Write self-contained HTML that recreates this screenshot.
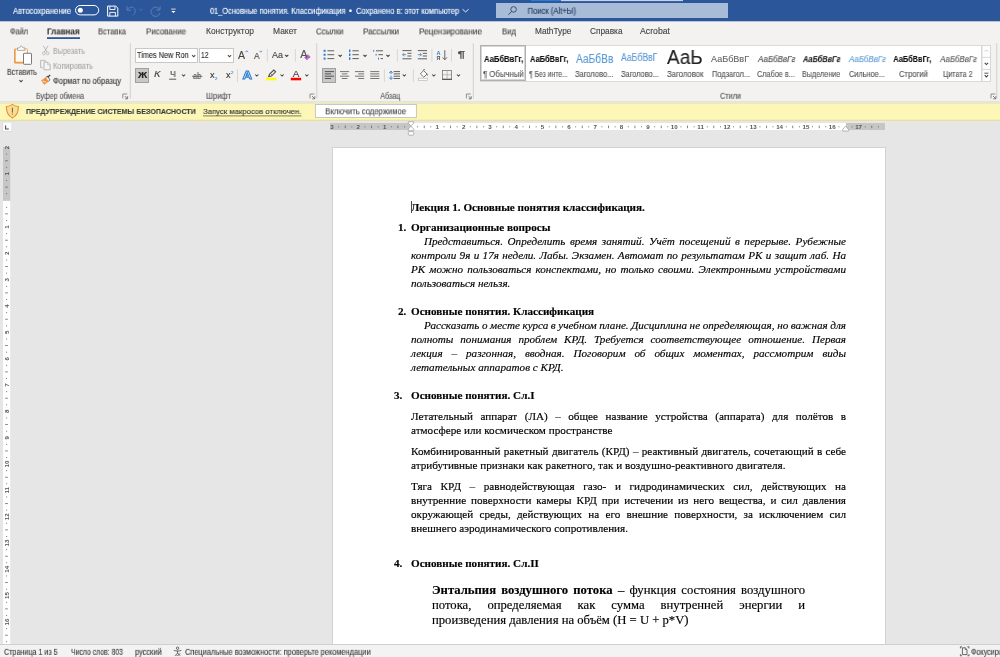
<!DOCTYPE html>
<html lang="ru">
<head>
<meta charset="utf-8">
<title>01_Основные понятия. Классификация - Word</title>
<style>
html,body{margin:0;padding:0;}
body{width:1000px;height:657px;overflow:hidden;position:relative;background:#e6e6e6;font-family:'Liberation Sans',sans-serif;}
#app{position:absolute;left:0;top:0;width:1000px;height:657px;overflow:hidden;}
.abs{position:absolute;}
.t{-webkit-text-stroke:0.12px currentColor;will-change:transform;position:absolute;white-space:pre;line-height:12px;height:12px;transform-origin:0 50%;}
#titlebar{left:0;top:0;width:1000px;height:21px;background:#2b579a;}
#search{left:496px;top:3px;width:232px;height:15px;background:#a8bbd7;}
#tbedge{left:0;top:21px;width:1000px;height:1px;background:#b7c3d7;}
#ribbon{left:0;top:21px;width:1000px;height:81px;background:#f3f2f1;}
#ribbonline{left:0;top:101px;width:1000px;height:1px;background:#e4e3dc;}
#msgbar{left:0;top:102px;width:1000px;height:18px;background:#fcf7b6;border-top:1px solid #ece6a4;border-bottom:1px solid #e6e0a2;box-sizing:border-box;will-change:transform;transform:translateY(0.7px);}
#msgbtn{left:315px;top:104px;width:101px;height:13px;background:#fdfdfd;border:1px solid #c6c6c6;box-sizing:border-box;}
#page{left:332px;top:147px;width:554px;height:520px;background:#fff;border:1px solid #d2d2d2;box-sizing:border-box;}
#status{left:0;top:644px;width:1000px;height:13px;background:#f3f3f3;border-top:1px solid #cfcfcf;box-sizing:border-box;}
#gallery{left:480px;top:45px;width:502px;height:37px;background:#fff;border:1px solid #dadada;box-sizing:border-box;}
#galsel{left:480px;top:45px;width:46px;height:36px;border:1px solid #b0b0b0;box-shadow:inset 0 0 0 1px #d6d6d6;box-sizing:border-box;background:#fff;}
.fbox{background:#fff;border:1px solid #c8c8c8;box-sizing:border-box;}
.sel{background:#c8c8c8;border:1px solid #a0a0a0;box-sizing:border-box;}
.dl{will-change:transform;position:absolute;white-space:pre;font-family:'Liberation Serif',serif;font-size:11.15px;line-height:14px;height:14px;color:#000;-webkit-text-stroke:0.16px #000;}
.j{text-align:justify;text-align-last:justify;white-space:normal;}
svg{position:absolute;left:0;top:0;overflow:visible;will-change:transform;}
</style>
</head>
<body>
<div id="app">
<div class="abs" id="titlebar"></div>
<div class="abs" id="search"></div>
<div class="abs" id="ribbon"></div>
<div class="abs" id="tbedge"></div>
<div class="abs" id="ribbonline"></div>
<div class="abs" id="msgbar"></div>
<div class="abs" id="gallery"></div>
<div class="abs" id="galsel"></div>
<div class="abs fbox" style="left:135px;top:48px;width:63px;height:15px"></div>
<div class="abs fbox" style="left:199px;top:48px;width:35px;height:15px"></div>
<div class="abs sel" style="left:135px;top:68px;width:14px;height:15px"></div>
<div class="abs sel" style="left:322px;top:68px;width:14px;height:15px"></div>
<div class="abs" id="page"></div>
<div class="dl" style="left:411px;top:199px;transform:translate(0.00px,1.00px);font-weight:bold;">Лекция 1. Основные понятия классификация.</div>
<div class="dl" style="left:398px;top:220px;transform:translate(0.00px,0.34px);font-weight:bold;">1.</div>
<div class="dl" style="left:411px;top:220px;transform:translate(0.00px,0.34px);font-weight:bold;">Организационные вопросы</div>
<div class="dl" style="left:424px;top:234px;transform:translate(0.00px,0.34px);word-spacing:1.744px;font-style:italic;">Представиться. Определить время занятий. Учёт посещений в перерыве. Рубежные</div>
<div class="dl" style="left:411px;top:248px;transform:translate(0.00px,0.34px);word-spacing:0.568px;font-style:italic;">контроли 9я и 17я недели. Лабы. Экзамен. Автомат по результатам РК и защит лаб. На</div>
<div class="dl" style="left:411px;top:262px;transform:translate(0.00px,0.34px);word-spacing:1.307px;font-style:italic;">РК можно пользоваться конспектами, но только своими. Электронными устройствами</div>
<div class="dl" style="left:411px;top:276px;transform:translate(0.00px,0.34px);font-style:italic;">пользоваться нельзя.</div>
<div class="dl" style="left:398px;top:303px;transform:translate(0.00px,1.00px);font-weight:bold;">2.</div>
<div class="dl" style="left:411px;top:303px;transform:translate(0.00px,1.00px);font-weight:bold;">Основные понятия. Классификация</div>
<div class="dl" style="left:424px;top:317px;transform:translate(0.00px,1.00px);word-spacing:-0.223px;font-style:italic;">Рассказать о месте курса в учебном плане. Дисциплина не определяющая, но важная для</div>
<div class="dl" style="left:411px;top:331px;transform:translate(0.00px,1.00px);word-spacing:4.109px;font-style:italic;">полноты понимания проблем КРД. Требуется соответствующее отношение. Первая</div>
<div class="dl" style="left:411px;top:345px;transform:translate(0.00px,1.00px);word-spacing:6.130px;font-style:italic;">лекция – разгонная, вводная. Поговорим об общих моментах, рассмотрим виды</div>
<div class="dl" style="left:411px;top:359px;transform:translate(0.00px,1.00px);font-style:italic;">летательных аппаратов с КРД.</div>
<div class="dl" style="left:394px;top:387px;transform:translate(0.00px,1.00px);font-weight:bold;">3.</div>
<div class="dl" style="left:411px;top:387px;transform:translate(0.00px,1.00px);font-weight:bold;">Основные понятия. Сл.I</div>
<div class="dl" style="left:411px;top:408px;transform:translate(0.00px,1.00px);word-spacing:4.709px;">Летательный аппарат (ЛА) – общее название устройства (аппарата) для полётов в</div>
<div class="dl" style="left:411px;top:422px;transform:translate(0.00px,1.00px);">атмосфере или космическом пространстве</div>
<div class="dl" style="left:411px;top:443px;transform:translate(0.00px,1.00px);word-spacing:0.521px;">Комбинированный ракетный двигатель (КРД) – реактивный двигатель, сочетающий в себе</div>
<div class="dl" style="left:411px;top:457px;transform:translate(0.00px,1.00px);">атрибутивные признаки как ракетного, так и воздушно-реактивного двигателя.</div>
<div class="dl" style="left:411px;top:478px;transform:translate(0.00px,1.00px);word-spacing:5.816px;">Тяга КРД – равнодействующая газо- и гидродинамических сил, действующих на</div>
<div class="dl" style="left:411px;top:492px;transform:translate(0.00px,1.00px);word-spacing:2.126px;">внутренние поверхности камеры КРД при истечении из него вещества, и сил давления</div>
<div class="dl" style="left:411px;top:506px;transform:translate(0.00px,1.00px);word-spacing:3.396px;">окружающей среды, действующих на его внешние поверхности, за исключением сил</div>
<div class="dl" style="left:411px;top:520px;transform:translate(0.00px,1.00px);">внешнего аэродинамического сопротивления.</div>
<div class="dl" style="left:394px;top:555px;transform:translate(0.00px,1.00px);font-weight:bold;">4.</div>
<div class="dl" style="left:411px;top:555px;transform:translate(0.00px,1.00px);font-weight:bold;">Основные понятия. Сл.II</div>
<div class="dl" style="left:432px;top:582px;transform:translate(0.00px,0.00px);word-spacing:2.083px;font-size:12.68px;line-height:16px;height:16px;"><b>Энтальпия воздушного потока</b> – функция состояния воздушного</div>
<div class="dl" style="left:432px;top:597px;transform:translate(0.00px,0.00px);word-spacing:12.839px;font-size:12.68px;line-height:16px;height:16px;">потока, определяемая как сумма внутренней энергии и</div>
<div class="dl" style="left:432px;top:612px;transform:translate(0.00px,0.00px);font-size:12.68px;line-height:16px;height:16px;">произведения давления на объём (H = U + p*V)</div>
<div class="abs" style="left:411px;top:201px;width:1px;height:12px;background:#4a4a4a"></div>
<div class="abs" id="status"></div>
<svg width="1000" height="657" viewBox="0 0 1000 657" font-family="'Liberation Sans',sans-serif">
<rect x="2" y="121.5" width="10.5" height="10.5" fill="#dedede"/>
<rect x="3" y="122.5" width="8.5" height="8.5" fill="#fbfbfb"/>
<path d="M5.6 125.6v3.4h3.2" fill="none" stroke="#505050" stroke-width="1.1"/>
<rect x="330" y="123" width="81" height="7" fill="#c6c6c6"/>
<rect x="411" y="123" width="435" height="7" fill="#fff"/>
<rect x="846" y="123" width="39" height="7" fill="#c6c6c6"/>
<text x="332.0" y="128.9" font-size="6.2" font-weight="700" fill="#555" text-anchor="middle">3</text>
<rect x="338.2" y="126.3" width="0.9" height="1" fill="#666"/>
<rect x="344.8" y="125.6" width="0.8" height="2.6" fill="#666"/>
<rect x="351.4" y="126.3" width="0.9" height="1" fill="#666"/>
<text x="358.3" y="128.9" font-size="6.2" font-weight="700" fill="#555" text-anchor="middle">2</text>
<rect x="364.5" y="126.3" width="0.9" height="1" fill="#666"/>
<rect x="371.2" y="125.6" width="0.8" height="2.6" fill="#666"/>
<rect x="377.7" y="126.3" width="0.9" height="1" fill="#666"/>
<text x="384.7" y="128.9" font-size="6.2" font-weight="700" fill="#555" text-anchor="middle">1</text>
<rect x="390.9" y="126.3" width="0.9" height="1" fill="#666"/>
<rect x="397.5" y="125.6" width="0.8" height="2.6" fill="#666"/>
<rect x="404.0" y="126.3" width="0.9" height="1" fill="#666"/>
<rect x="417.2" y="126.3" width="0.9" height="1" fill="#666"/>
<rect x="423.8" y="125.6" width="0.8" height="2.6" fill="#666"/>
<rect x="430.3" y="126.3" width="0.9" height="1" fill="#666"/>
<text x="437.3" y="128.9" font-size="6.2" font-weight="700" fill="#555" text-anchor="middle">1</text>
<rect x="443.5" y="126.3" width="0.9" height="1" fill="#666"/>
<rect x="450.1" y="125.6" width="0.8" height="2.6" fill="#666"/>
<rect x="456.7" y="126.3" width="0.9" height="1" fill="#666"/>
<text x="463.7" y="128.9" font-size="6.2" font-weight="700" fill="#555" text-anchor="middle">2</text>
<rect x="469.8" y="126.3" width="0.9" height="1" fill="#666"/>
<rect x="476.5" y="125.6" width="0.8" height="2.6" fill="#666"/>
<rect x="483.0" y="126.3" width="0.9" height="1" fill="#666"/>
<text x="490.0" y="128.9" font-size="6.2" font-weight="700" fill="#555" text-anchor="middle">3</text>
<rect x="496.2" y="126.3" width="0.9" height="1" fill="#666"/>
<rect x="502.8" y="125.6" width="0.8" height="2.6" fill="#666"/>
<rect x="509.3" y="126.3" width="0.9" height="1" fill="#666"/>
<text x="516.3" y="128.9" font-size="6.2" font-weight="700" fill="#555" text-anchor="middle">4</text>
<rect x="522.5" y="126.3" width="0.9" height="1" fill="#666"/>
<rect x="529.1" y="125.6" width="0.8" height="2.6" fill="#666"/>
<rect x="535.7" y="126.3" width="0.9" height="1" fill="#666"/>
<text x="542.6" y="128.9" font-size="6.2" font-weight="700" fill="#555" text-anchor="middle">5</text>
<rect x="548.8" y="126.3" width="0.9" height="1" fill="#666"/>
<rect x="555.5" y="125.6" width="0.8" height="2.6" fill="#666"/>
<rect x="562.0" y="126.3" width="0.9" height="1" fill="#666"/>
<text x="569.0" y="128.9" font-size="6.2" font-weight="700" fill="#555" text-anchor="middle">6</text>
<rect x="575.2" y="126.3" width="0.9" height="1" fill="#666"/>
<rect x="581.8" y="125.6" width="0.8" height="2.6" fill="#666"/>
<rect x="588.3" y="126.3" width="0.9" height="1" fill="#666"/>
<text x="595.3" y="128.9" font-size="6.2" font-weight="700" fill="#555" text-anchor="middle">7</text>
<rect x="601.5" y="126.3" width="0.9" height="1" fill="#666"/>
<rect x="608.1" y="125.6" width="0.8" height="2.6" fill="#666"/>
<rect x="614.7" y="126.3" width="0.9" height="1" fill="#666"/>
<text x="621.6" y="128.9" font-size="6.2" font-weight="700" fill="#555" text-anchor="middle">8</text>
<rect x="627.8" y="126.3" width="0.9" height="1" fill="#666"/>
<rect x="634.5" y="125.6" width="0.8" height="2.6" fill="#666"/>
<rect x="641.0" y="126.3" width="0.9" height="1" fill="#666"/>
<text x="648.0" y="128.9" font-size="6.2" font-weight="700" fill="#555" text-anchor="middle">9</text>
<rect x="654.2" y="126.3" width="0.9" height="1" fill="#666"/>
<rect x="660.8" y="125.6" width="0.8" height="2.6" fill="#666"/>
<rect x="667.3" y="126.3" width="0.9" height="1" fill="#666"/>
<text x="674.3" y="128.9" font-size="6.2" font-weight="700" fill="#555" text-anchor="middle">10</text>
<rect x="680.5" y="126.3" width="0.9" height="1" fill="#666"/>
<rect x="687.1" y="125.6" width="0.8" height="2.6" fill="#666"/>
<rect x="693.6" y="126.3" width="0.9" height="1" fill="#666"/>
<text x="700.6" y="128.9" font-size="6.2" font-weight="700" fill="#555" text-anchor="middle">11</text>
<rect x="706.8" y="126.3" width="0.9" height="1" fill="#666"/>
<rect x="713.4" y="125.6" width="0.8" height="2.6" fill="#666"/>
<rect x="720.0" y="126.3" width="0.9" height="1" fill="#666"/>
<text x="727.0" y="128.9" font-size="6.2" font-weight="700" fill="#555" text-anchor="middle">12</text>
<rect x="733.1" y="126.3" width="0.9" height="1" fill="#666"/>
<rect x="739.8" y="125.6" width="0.8" height="2.6" fill="#666"/>
<rect x="746.3" y="126.3" width="0.9" height="1" fill="#666"/>
<text x="753.3" y="128.9" font-size="6.2" font-weight="700" fill="#555" text-anchor="middle">13</text>
<rect x="759.5" y="126.3" width="0.9" height="1" fill="#666"/>
<rect x="766.1" y="125.6" width="0.8" height="2.6" fill="#666"/>
<rect x="772.6" y="126.3" width="0.9" height="1" fill="#666"/>
<text x="779.6" y="128.9" font-size="6.2" font-weight="700" fill="#555" text-anchor="middle">14</text>
<rect x="785.8" y="126.3" width="0.9" height="1" fill="#666"/>
<rect x="792.4" y="125.6" width="0.8" height="2.6" fill="#666"/>
<rect x="799.0" y="126.3" width="0.9" height="1" fill="#666"/>
<text x="806.0" y="128.9" font-size="6.2" font-weight="700" fill="#555" text-anchor="middle">15</text>
<rect x="812.1" y="126.3" width="0.9" height="1" fill="#666"/>
<rect x="818.8" y="125.6" width="0.8" height="2.6" fill="#666"/>
<rect x="825.3" y="126.3" width="0.9" height="1" fill="#666"/>
<text x="832.3" y="128.9" font-size="6.2" font-weight="700" fill="#555" text-anchor="middle">16</text>
<rect x="838.5" y="126.3" width="0.9" height="1" fill="#666"/>
<rect x="851.6" y="126.3" width="0.9" height="1" fill="#666"/>
<text x="858.6" y="128.9" font-size="6.2" font-weight="700" fill="#555" text-anchor="middle">17</text>
<rect x="864.8" y="126.3" width="0.9" height="1" fill="#666"/>
<rect x="871.4" y="125.6" width="0.8" height="2.6" fill="#666"/>
<rect x="878.0" y="126.3" width="0.9" height="1" fill="#666"/>
<path d="M408.3 121.7h5.4v1.6l-2.7 2.9l-2.7 -2.9z" fill="#fff" stroke="#999" stroke-width="0.7"/>
<path d="M408.3 130.7h5.4v-1.6l-2.7 -2.9l-2.7 2.9z" fill="#fff" stroke="#999" stroke-width="0.7"/>
<rect x="408.3" y="131.6" width="5.4" height="3.6" rx="0.8" fill="#fff" stroke="#999" stroke-width="0.7"/>
<path d="M842.7 131h5.8v-1.6l-2.9 -3.2l-2.9 3.2z" fill="#fff" stroke="#999" stroke-width="0.7"/>
<rect x="3" y="147" width="7.2" height="53.9" fill="#c6c6c6"/>
<rect x="3" y="200.9" width="7.2" height="443.1" fill="#fff"/>
<text transform="translate(8.8 147.5) rotate(-90)" font-size="6.2" font-weight="700" fill="#555" text-anchor="middle">2</text>
<rect x="6.1" y="153.7" width="1" height="0.9" fill="#666"/>
<rect x="5.2" y="160.4" width="2.6" height="0.8" fill="#666"/>
<rect x="6.1" y="166.9" width="1" height="0.9" fill="#666"/>
<text transform="translate(8.8 173.9) rotate(-90)" font-size="6.2" font-weight="700" fill="#555" text-anchor="middle">1</text>
<rect x="6.1" y="180.1" width="1" height="0.9" fill="#666"/>
<rect x="5.2" y="186.7" width="2.6" height="0.8" fill="#666"/>
<rect x="6.1" y="193.2" width="1" height="0.9" fill="#666"/>
<rect x="6.1" y="206.9" width="1" height="0.9" fill="#666"/>
<rect x="5.2" y="213.5" width="2.6" height="0.8" fill="#666"/>
<rect x="6.1" y="220.0" width="1" height="0.9" fill="#666"/>
<text transform="translate(8.8 227.0) rotate(-90)" font-size="6.2" font-weight="700" fill="#555" text-anchor="middle">1</text>
<rect x="6.1" y="233.2" width="1" height="0.9" fill="#666"/>
<rect x="5.2" y="239.8" width="2.6" height="0.8" fill="#666"/>
<rect x="6.1" y="246.4" width="1" height="0.9" fill="#666"/>
<text transform="translate(8.8 253.4) rotate(-90)" font-size="6.2" font-weight="700" fill="#555" text-anchor="middle">2</text>
<rect x="6.1" y="259.5" width="1" height="0.9" fill="#666"/>
<rect x="5.2" y="266.2" width="2.6" height="0.8" fill="#666"/>
<rect x="6.1" y="272.7" width="1" height="0.9" fill="#666"/>
<text transform="translate(8.8 279.7) rotate(-90)" font-size="6.2" font-weight="700" fill="#555" text-anchor="middle">3</text>
<rect x="6.1" y="285.9" width="1" height="0.9" fill="#666"/>
<rect x="5.2" y="292.5" width="2.6" height="0.8" fill="#666"/>
<rect x="6.1" y="299.0" width="1" height="0.9" fill="#666"/>
<text transform="translate(8.8 306.0) rotate(-90)" font-size="6.2" font-weight="700" fill="#555" text-anchor="middle">4</text>
<rect x="6.1" y="312.2" width="1" height="0.9" fill="#666"/>
<rect x="5.2" y="318.8" width="2.6" height="0.8" fill="#666"/>
<rect x="6.1" y="325.4" width="1" height="0.9" fill="#666"/>
<text transform="translate(8.8 332.3) rotate(-90)" font-size="6.2" font-weight="700" fill="#555" text-anchor="middle">5</text>
<rect x="6.1" y="338.5" width="1" height="0.9" fill="#666"/>
<rect x="5.2" y="345.2" width="2.6" height="0.8" fill="#666"/>
<rect x="6.1" y="351.7" width="1" height="0.9" fill="#666"/>
<text transform="translate(8.8 358.7) rotate(-90)" font-size="6.2" font-weight="700" fill="#555" text-anchor="middle">6</text>
<rect x="6.1" y="364.9" width="1" height="0.9" fill="#666"/>
<rect x="5.2" y="371.5" width="2.6" height="0.8" fill="#666"/>
<rect x="6.1" y="378.0" width="1" height="0.9" fill="#666"/>
<text transform="translate(8.8 385.0) rotate(-90)" font-size="6.2" font-weight="700" fill="#555" text-anchor="middle">7</text>
<rect x="6.1" y="391.2" width="1" height="0.9" fill="#666"/>
<rect x="5.2" y="397.8" width="2.6" height="0.8" fill="#666"/>
<rect x="6.1" y="404.4" width="1" height="0.9" fill="#666"/>
<text transform="translate(8.8 411.3) rotate(-90)" font-size="6.2" font-weight="700" fill="#555" text-anchor="middle">8</text>
<rect x="6.1" y="417.5" width="1" height="0.9" fill="#666"/>
<rect x="5.2" y="424.2" width="2.6" height="0.8" fill="#666"/>
<rect x="6.1" y="430.7" width="1" height="0.9" fill="#666"/>
<text transform="translate(8.8 437.7) rotate(-90)" font-size="6.2" font-weight="700" fill="#555" text-anchor="middle">9</text>
<rect x="6.1" y="443.9" width="1" height="0.9" fill="#666"/>
<rect x="5.2" y="450.5" width="2.6" height="0.8" fill="#666"/>
<rect x="6.1" y="457.0" width="1" height="0.9" fill="#666"/>
<text transform="translate(8.8 464.0) rotate(-90)" font-size="6.2" font-weight="700" fill="#555" text-anchor="middle">10</text>
<rect x="6.1" y="470.2" width="1" height="0.9" fill="#666"/>
<rect x="5.2" y="476.8" width="2.6" height="0.8" fill="#666"/>
<rect x="6.1" y="483.3" width="1" height="0.9" fill="#666"/>
<text transform="translate(8.8 490.3) rotate(-90)" font-size="6.2" font-weight="700" fill="#555" text-anchor="middle">11</text>
<rect x="6.1" y="496.5" width="1" height="0.9" fill="#666"/>
<rect x="5.2" y="503.1" width="2.6" height="0.8" fill="#666"/>
<rect x="6.1" y="509.7" width="1" height="0.9" fill="#666"/>
<text transform="translate(8.8 516.7) rotate(-90)" font-size="6.2" font-weight="700" fill="#555" text-anchor="middle">12</text>
<rect x="6.1" y="522.8" width="1" height="0.9" fill="#666"/>
<rect x="5.2" y="529.5" width="2.6" height="0.8" fill="#666"/>
<rect x="6.1" y="536.0" width="1" height="0.9" fill="#666"/>
<text transform="translate(8.8 543.0) rotate(-90)" font-size="6.2" font-weight="700" fill="#555" text-anchor="middle">13</text>
<rect x="6.1" y="549.2" width="1" height="0.9" fill="#666"/>
<rect x="5.2" y="555.8" width="2.6" height="0.8" fill="#666"/>
<rect x="6.1" y="562.3" width="1" height="0.9" fill="#666"/>
<text transform="translate(8.8 569.3) rotate(-90)" font-size="6.2" font-weight="700" fill="#555" text-anchor="middle">14</text>
<rect x="6.1" y="575.5" width="1" height="0.9" fill="#666"/>
<rect x="5.2" y="582.1" width="2.6" height="0.8" fill="#666"/>
<rect x="6.1" y="588.7" width="1" height="0.9" fill="#666"/>
<text transform="translate(8.8 595.6) rotate(-90)" font-size="6.2" font-weight="700" fill="#555" text-anchor="middle">15</text>
<rect x="6.1" y="601.8" width="1" height="0.9" fill="#666"/>
<rect x="5.2" y="608.5" width="2.6" height="0.8" fill="#666"/>
<rect x="6.1" y="615.0" width="1" height="0.9" fill="#666"/>
<text transform="translate(8.8 622.0) rotate(-90)" font-size="6.2" font-weight="700" fill="#555" text-anchor="middle">16</text>
<rect x="6.1" y="628.2" width="1" height="0.9" fill="#666"/>
<rect x="5.2" y="634.8" width="2.6" height="0.8" fill="#666"/>
<rect x="6.1" y="641.3" width="1" height="0.9" fill="#666"/>
</svg>
<svg width="1000" height="657" viewBox="0 0 1000 657" fill="none" font-family="'Liberation Sans',sans-serif">
<rect x="561" y="0" width="122" height="1.1" fill="#c6d3e7"/>
<rect x="531" y="0" width="30" height="1.1" fill="#2d7ad6"/>
<rect x="75.5" y="5.5" width="23.2" height="9.4" rx="4.7" stroke="#fff" stroke-width="1"/>
<circle cx="80.3" cy="10.2" r="2.5" fill="#fff"/>
<path d="M107.6 6.1h8.2l2 2v8h-10.2z" stroke="#fff" stroke-width="1"/>
<path d="M109.8 6.3v3.2h5.2v-3.2M109.8 16v-3.6h5.6v3.6" stroke="#fff" stroke-width="0.9"/>
<path d="M127 6.2v4h4M127.3 10c1.2-2.6 4.2-3.6 6.3-2.2c2.4 1.6 2.4 5-0.6 7.6" stroke="#5c7cb4" stroke-width="1"/>
<path d="M139.40 8.80l1.60 1.60l1.60 -1.60" stroke="#5c7cb4" stroke-width="0.8"/>
<path d="M160 6.2v3.8h-3.8M159.7 9.8a4.6 4.6 0 1 0 0.3 3.2" stroke="#5c7cb4" stroke-width="1"/>
<path d="M171.2 9.1h4.4" stroke="#fff" stroke-width="0.8"/>
<path d="M171.3 10.9h4.2l-2.1 2.1z" fill="#fff"/>
<path d="M462.60 9.30l3.00 2.60l3.00 -2.60" stroke="#fff" stroke-width="0.9"/>
<circle cx="513.6" cy="9.4" r="2.8" stroke="#2b4672" stroke-width="0.9"/>
<path d="M511.6 11.5l-3.1 3.2" stroke="#2b4672" stroke-width="1"/>
<rect x="47" y="37.2" width="33" height="1.8" fill="#2b579a"/>
<path d="M130.30 43.20V98.50" stroke="#d0d0d0" stroke-width="1"/>
<path d="M316.80 43.20V98.50" stroke="#d0d0d0" stroke-width="1"/>
<path d="M473.30 43.20V98.50" stroke="#d0d0d0" stroke-width="1"/>
<path d="M996.80 43.20V98.50" stroke="#d0d0d0" stroke-width="1"/>
<path d="M267.40 49.00V61.80" stroke="#d2d2d2" stroke-width="0.9"/>
<path d="M295.40 49.00V61.80" stroke="#d2d2d2" stroke-width="0.9"/>
<path d="M397.40 49.00V61.80" stroke="#d2d2d2" stroke-width="0.9"/>
<path d="M431.90 49.00V61.80" stroke="#d2d2d2" stroke-width="0.9"/>
<path d="M451.50 49.00V61.80" stroke="#d2d2d2" stroke-width="0.9"/>
<path d="M237.50 69.30V82.00" stroke="#d2d2d2" stroke-width="0.9"/>
<path d="M384.40 69.30V82.00" stroke="#d2d2d2" stroke-width="0.9"/>
<path d="M413.40 69.30V82.00" stroke="#d2d2d2" stroke-width="0.9"/>
<rect x="14.6" y="48.8" width="12.8" height="14.2" rx="0.8" fill="#fdfaf5" stroke="#eda55a" stroke-width="1"/>
<path d="M14.9 49v13.6h8" stroke="#ec9a45" stroke-width="1.5"/>
<path d="M17.5 50.4v-2.5h2l1.7-2.3l1.7 2.3h2v2.5z" fill="#fcfcfc" stroke="#9a9a9a" stroke-width="0.8"/>
<rect x="23.5" y="53.3" width="8" height="11" rx="0.6" fill="#fff" stroke="#7a7a7a" stroke-width="1"/>
<path d="M19.40 80.20l1.60 1.60l1.60 -1.60" stroke="#444" stroke-width="1.05"/>
<path d="M43.4 45.8l3.6 6.2M48 45.8l-3.6 6.2" stroke="#b4b4b4" stroke-width="0.9"/>
<circle cx="43.8" cy="53.4" r="1.4" stroke="#b4b4b4" stroke-width="0.8"/><circle cx="47.6" cy="53.4" r="1.4" stroke="#b4b4b4" stroke-width="0.8"/>
<path d="M42.8 67.6h-2.2v-7.2h4.6v1.6" stroke="#b4b4b4" stroke-width="0.9"/>
<path d="M44 62.2h3.8l2.4 2.4v5.2h-6.2z" fill="#f6f6f6" stroke="#b0b0b0" stroke-width="0.9"/>
<path d="M47.6 62.4v2.4h2.4" stroke="#b4b4b4" stroke-width="0.7"/>
<path d="M41.2 80.4l4.4-3l3 4.2l-4.4 3.2z" fill="#ef8b33"/>
<path d="M42.6 81l3.6 1.2" stroke="#fff" stroke-width="0.8"/>
<path d="M45.6 77.6l1.8-1.4l2.6 3.6l-1.6 1.4" stroke="#555" stroke-width="0.9"/>
<path d="M47.6 77.2l2.6-2.2" stroke="#444" stroke-width="1.3"/>
<path d="M122.80 98.40v-4.4h4.4" stroke="#777" stroke-width="0.8"/>
<path d="M124.80 96.00l2.6 2.6m0.2 -2.4v2.6h-2.6" stroke="#666" stroke-width="0.8"/>
<path d="M192.10 55.20l1.60 1.60l1.60 -1.60" stroke="#444" stroke-width="1.05"/>
<path d="M227.90 55.20l1.60 1.60l1.60 -1.60" stroke="#444" stroke-width="1.05"/>
<path d="M182.00 74.50l1.60 1.60l1.60 -1.60" stroke="#444" stroke-width="1.05"/>
<path d="M255.20 74.50l1.60 1.60l1.60 -1.60" stroke="#444" stroke-width="1.05"/>
<path d="M285.10 54.80l1.60 1.60l1.60 -1.60" stroke="#444" stroke-width="1.05"/>
<path d="M280.50 74.50l1.60 1.60l1.60 -1.60" stroke="#444" stroke-width="1.05"/>
<path d="M305.20 74.50l1.60 1.60l1.60 -1.60" stroke="#444" stroke-width="1.05"/>
<path d="M245.4 52.2l1.3-1.5l1.3 1.5" stroke="#2f7fd0" stroke-width="0.8"/>
<path d="M259.6 50.8l1.2 1.4l1.2-1.4" stroke="#2f7fd0" stroke-width="0.8"/>
<path d="M304.5 57.5l3.4-2.8l2.4 2.2l-3.4 3z" fill="#b868cf" stroke="#a44fc0" stroke-width="0.5"/>
<path d="M306.1 56.5l2.2 2.2" stroke="#f3e6f8" stroke-width="0.6"/>
<text x="247.3" y="79.4" font-size="11.6" font-weight="700" text-anchor="middle" fill="#e4effb" stroke="#2a7bd3" stroke-width="0.9" textLength="9.6" lengthAdjust="spacingAndGlyphs">A</text>
<path d="M268.6 76.6l1-2.6l4.2-4l1.8 1.8l-4.2 4.2z" stroke="#4a4a4a" stroke-width="1.05"/>
<path d="M270.4 73.4l1.8 1.8" stroke="#555" stroke-width="0.7"/>
<rect x="265.9" y="77.8" width="10.4" height="2.5" fill="#ffff00"/>
<rect x="290.8" y="77.8" width="10.3" height="2.5" fill="#ff0000"/>
<path d="M169.2 79.2h7" stroke="#444" stroke-width="0.9"/>
<path d="M192 76.3h10.4" stroke="#555" stroke-width="0.8"/>
<path d="M310.00 98.40v-4.4h4.4" stroke="#777" stroke-width="0.8"/>
<path d="M312.00 96.00l2.6 2.6m0.2 -2.4v2.6h-2.6" stroke="#666" stroke-width="0.8"/>
<rect x="323.6" y="49.80" width="2" height="2" fill="#2a7bd3"/>
<rect x="323.6" y="53.70" width="2" height="2" fill="#2a7bd3"/>
<rect x="323.6" y="57.60" width="2" height="2" fill="#2a7bd3"/>
<path d="M327.40 50.80H334.20" stroke="#5e5e5e" stroke-width="1.0"/>
<path d="M327.40 54.70H334.20" stroke="#5e5e5e" stroke-width="1.0"/>
<path d="M327.40 58.60H334.20" stroke="#5e5e5e" stroke-width="1.0"/>
<path d="M338.60 54.80l1.60 1.60l1.60 -1.60" stroke="#444" stroke-width="1.05"/>
<rect x="349" y="49.50" width="1.4" height="2.6" fill="#2a7bd3"/>
<rect x="349" y="53.40" width="1.4" height="2.6" fill="#2a7bd3"/>
<rect x="349" y="57.30" width="1.4" height="2.6" fill="#2a7bd3"/>
<path d="M352.40 50.80H358.80" stroke="#5e5e5e" stroke-width="1.0"/>
<path d="M352.40 54.70H358.80" stroke="#5e5e5e" stroke-width="1.0"/>
<path d="M352.40 58.60H358.80" stroke="#5e5e5e" stroke-width="1.0"/>
<path d="M363.40 54.80l1.60 1.60l1.60 -1.60" stroke="#444" stroke-width="1.05"/>
<rect x="373.2" y="49.9" width="1" height="1.8" fill="#2f7fd0"/>
<rect x="375.6" y="53.8" width="1" height="1.8" fill="#2f7fd0"/>
<rect x="378" y="57.7" width="1" height="1.8" fill="#2f7fd0"/>
<path d="M376.00 50.80H383.00" stroke="#5e5e5e" stroke-width="1.0"/>
<path d="M378.40 54.70H383.00" stroke="#5e5e5e" stroke-width="1.0"/>
<path d="M380.60 58.60H383.00" stroke="#5e5e5e" stroke-width="1.0"/>
<path d="M386.40 54.80l1.60 1.60l1.60 -1.60" stroke="#444" stroke-width="1.05"/>
<path d="M402.40 50.60H411.50" stroke="#5e5e5e" stroke-width="1.0"/>
<path d="M402.40 58.80H411.50" stroke="#5e5e5e" stroke-width="1.0"/>
<path d="M407.40 53.30H411.50" stroke="#5e5e5e" stroke-width="1.0"/>
<path d="M407.40 56.00H411.50" stroke="#5e5e5e" stroke-width="1.0"/>
<path d="M406.2 54.7h-3.6m1.5-1.6l-1.6 1.6l1.6 1.6" stroke="#2f7fd0" stroke-width="0.8"/>
<path d="M417.80 50.60H427.00" stroke="#5e5e5e" stroke-width="1.0"/>
<path d="M417.80 58.80H427.00" stroke="#5e5e5e" stroke-width="1.0"/>
<path d="M422.80 53.30H427.00" stroke="#5e5e5e" stroke-width="1.0"/>
<path d="M422.80 56.00H427.00" stroke="#5e5e5e" stroke-width="1.0"/>
<path d="M417.8 54.7h3.6m-1.5-1.6l1.6 1.6l-1.6 1.6" stroke="#2f7fd0" stroke-width="0.8"/>
<text x="436.6" y="54.6" font-size="5.6" font-weight="700" fill="#2f7fd0">А</text>
<text x="436.6" y="60" font-size="5.4" font-weight="700" fill="#555">Я</text>
<path d="M444.8 50.2v9.4m-2.2-2.2l2.2 2.4l2.2-2.4" stroke="#555" stroke-width="0.9"/>
<path d="M324.80 71.60H334.00" stroke="#555" stroke-width="1"/>
<path d="M324.80 76.20H334.00" stroke="#555" stroke-width="1"/>
<path d="M324.80 73.90H331.00" stroke="#555" stroke-width="1"/>
<path d="M324.80 78.50H331.00" stroke="#555" stroke-width="1"/>
<path d="M340.00 71.60H349.20" stroke="#666" stroke-width="0.9"/>
<path d="M340.00 76.20H349.20" stroke="#666" stroke-width="0.9"/>
<path d="M341.80 73.90H347.40" stroke="#666" stroke-width="0.9"/>
<path d="M341.80 78.50H347.40" stroke="#666" stroke-width="0.9"/>
<path d="M355.00 71.60H364.20" stroke="#666" stroke-width="0.9"/>
<path d="M355.00 76.20H364.20" stroke="#666" stroke-width="0.9"/>
<path d="M358.20 73.90H364.20" stroke="#666" stroke-width="0.9"/>
<path d="M358.20 78.50H364.20" stroke="#666" stroke-width="0.9"/>
<path d="M370.20 71.60H379.30" stroke="#666" stroke-width="0.9"/>
<path d="M370.20 73.90H379.30" stroke="#666" stroke-width="0.9"/>
<path d="M370.20 76.20H379.30" stroke="#666" stroke-width="0.9"/>
<path d="M370.20 78.50H379.30" stroke="#666" stroke-width="0.9"/>
<path d="M391 71.2v3m-1.7-1.2l1.7-1.9l1.7 1.9M391 75.8v3m-1.7-1.2l1.7 1.9l1.7-1.9" stroke="#2a7bd3" stroke-width="0.9"/>
<path d="M393.60 71.60H400.00" stroke="#5e5e5e" stroke-width="1.0"/>
<path d="M393.60 73.90H400.00" stroke="#5e5e5e" stroke-width="1.0"/>
<path d="M393.60 76.20H400.00" stroke="#5e5e5e" stroke-width="1.0"/>
<path d="M393.60 78.50H400.00" stroke="#5e5e5e" stroke-width="1.0"/>
<path d="M402.70 74.50l1.60 1.60l1.60 -1.60" stroke="#444" stroke-width="1.05"/>
<path d="M420.4 73.8l3.2-3.2l3.4 3.4l-3.2 3.2z" fill="#fbfbfb" stroke="#555" stroke-width="0.8"/>
<path d="M423.2 70.4c0.2-1.2 1.6-1.4 2-0.2" stroke="#555" stroke-width="0.7"/>
<path d="M427 73.2c0.9 1 0.9 2.2 0.3 2.8c-0.6-0.6-0.9-1.6-0.3-2.8z" fill="#2f7fd0"/>
<rect x="418.6" y="78.2" width="9" height="2.2" fill="#fdfdfd" stroke="#b0b0b0" stroke-width="0.6"/>
<path d="M432.20 74.50l1.60 1.60l1.60 -1.60" stroke="#444" stroke-width="1.05"/>
<rect x="442.6" y="70.4" width="9" height="8.8" stroke="#666" stroke-width="0.7"/>
<path d="M447.1 70.6v8.4M442.8 74.8h8.6" stroke="#9a9a9a" stroke-width="0.6"/>
<path d="M442.2 79.3h9.8" stroke="#444" stroke-width="1"/>
<path d="M456.90 74.50l1.60 1.60l1.60 -1.60" stroke="#444" stroke-width="1.05"/>
<path d="M466.40 98.40v-4.4h4.4" stroke="#777" stroke-width="0.8"/>
<path d="M468.40 96.00l2.6 2.6m0.2 -2.4v2.6h-2.6" stroke="#666" stroke-width="0.8"/>
<rect x="982" y="45.4" width="8.6" height="36.2" fill="#fdfdfd" stroke="#cfcfcf" stroke-width="0.8"/>
<path d="M982 57.4h8.6M982 69.4h8.6" stroke="#cfcfcf" stroke-width="0.8"/>
<path d="M984.8 51.6l1.6-1.6l1.6 1.6" stroke="#c4c4c4" stroke-width="0.9"/>
<path d="M984.7 62.8l1.7 1.7l1.7-1.7" stroke="#444" stroke-width="1.05"/>
<path d="M984.4 73.2h4" stroke="#444" stroke-width="0.9"/><path d="M984.7 75.2l1.7 1.7l1.7-1.7" stroke="#444" stroke-width="1.05"/>
<path d="M991.00 98.40v-4.4h4.4" stroke="#777" stroke-width="0.8"/>
<path d="M993.00 96.00l2.6 2.6m0.2 -2.4v2.6h-2.6" stroke="#666" stroke-width="0.8"/>
<rect x="315.4" y="104.5" width="101" height="13" fill="#fff" stroke="#c2c2c2" stroke-width="0.9"/>
<path d="M12.4 104.4c1.8 1.4 3.8 2 6 2.1c0.2 5.2-1.6 9.2-6 11.4c-4.4-2.2-6.2-6.2-6-11.4c2.2-0.1 4.2-0.7 6-2.1z" fill="#f8dd98" stroke="#e8912d" stroke-width="1.1"/>
<path d="M12.4 107.6v5" stroke="#8a5a14" stroke-width="1"/><rect x="11.9" y="113.6" width="1" height="1" fill="#8a5a14"/>
<path d="M203 115.9H301.4" stroke="#4a4a40" stroke-width="0.7"/>
<circle cx="177.6" cy="648.2" r="1.2" stroke="#444" stroke-width="0.8"/>
<path d="M173.8 650.4c2.4 0.8 5.2 0.8 7.6 0M177.6 650.8v2.2M177.6 653l-2.6 2.8M177.6 653l2.6 2.8" stroke="#444" stroke-width="0.8"/>
<path d="M176.4 654.8l1.2 1.2l2.6-2.8" stroke="#444" stroke-width="0.7"/>
<path d="M960.4 648.4v-1.6h1.6M967.4 646.8h1.6v1.6M969 654.2v1.6h-1.6M962 655.8h-1.6v-1.6" stroke="#444" stroke-width="0.8"/>
<path d="M962.4 647.8h2.8l1.8 1.8v5h-4.6z" stroke="#444" stroke-width="0.8"/>
<path d="M965.2 647.8v1.8h1.8" stroke="#444" stroke-width="0.6"/>
</svg>
<div class="t" style="left:13px;top:4px;font-size:8.3px;color:#fff;transform:translate(0.00px,0.82px) scaleX(0.9170);">Автосохранение</div>
<div class="t" style="left:210px;top:4px;font-size:8.3px;color:#fff;transform:translate(0.00px,0.82px) scaleX(0.8901);">01_Основные понятия. Классификация</div>
<div class="t" style="left:349px;top:4px;font-size:8.3px;color:#fff;transform:translate(0.00px,0.82px);">•</div>
<div class="t" style="left:356px;top:4px;font-size:8.3px;color:#fff;transform:translate(0.00px,0.82px) scaleX(0.9074);">Сохранено в: этот компьютер</div>
<div class="t" style="left:527px;top:4px;font-size:8.3px;color:#23395d;transform:translate(0.60px,0.82px) scaleX(0.9184);">Поиск (Alt+Ы)</div>
<div class="t" style="left:10px;top:25px;font-size:8.3px;color:#444;transform:translate(0.00px,0.42px) scaleX(0.8821);">Файл</div>
<div class="t" style="left:47px;top:25px;font-size:8.3px;color:#333;font-weight:700;transform:translate(0.00px,0.42px) scaleX(0.9630);">Главная</div>
<div class="t" style="left:98px;top:25px;font-size:8.3px;color:#444;transform:translate(0.00px,0.42px) scaleX(0.9078);">Вставка</div>
<div class="t" style="left:146px;top:25px;font-size:8.3px;color:#444;transform:translate(0.00px,0.42px) scaleX(0.9570);">Рисование</div>
<div class="t" style="left:206px;top:25px;font-size:8.3px;color:#444;transform:translate(0.00px,0.42px) scaleX(1.0145);">Конструктор</div>
<div class="t" style="left:273px;top:25px;font-size:8.3px;color:#444;transform:translate(0.00px,0.42px) scaleX(1.0220);">Макет</div>
<div class="t" style="left:316px;top:25px;font-size:8.3px;color:#444;transform:translate(0.00px,0.42px) scaleX(0.9412);">Ссылки</div>
<div class="t" style="left:363px;top:25px;font-size:8.3px;color:#444;transform:translate(0.00px,0.42px) scaleX(0.9664);">Рассылки</div>
<div class="t" style="left:419px;top:25px;font-size:8.3px;color:#444;transform:translate(0.00px,0.42px) scaleX(0.9832);">Рецензирование</div>
<div class="t" style="left:502px;top:25px;font-size:8.3px;color:#444;transform:translate(0.00px,0.42px) scaleX(0.9324);">Вид</div>
<div class="t" style="left:535px;top:25px;font-size:8.3px;color:#444;transform:translate(0.00px,0.42px);">MathType</div>
<div class="t" style="left:590px;top:25px;font-size:8.3px;color:#444;transform:translate(0.00px,0.42px);">Справка</div>
<div class="t" style="left:640px;top:25px;font-size:8.3px;color:#444;transform:translate(0.00px,0.42px) scaleX(1.0492);">Acrobat</div>
<div class="t" style="left:7px;top:65px;font-size:8.3px;color:#3c3c3c;transform:translate(0.00px,0.82px) scaleX(0.8501);">Вставить</div>
<div class="t" style="left:53px;top:44px;font-size:8.3px;color:#a8a8a8;transform:translate(0.00px,0.82px) scaleX(0.8671);">Вырезать</div>
<div class="t" style="left:53px;top:59px;font-size:8.3px;color:#a8a8a8;transform:translate(0.00px,0.82px) scaleX(0.8951);">Копировать</div>
<div class="t" style="left:53px;top:74px;font-size:8.3px;color:#333;transform:translate(0.00px,0.82px) scaleX(0.9139);">Формат по образцу</div>
<div class="t" style="left:36px;top:89px;font-size:8.3px;color:#555;transform:translate(0.00px,0.82px) scaleX(0.8512);">Буфер обмена</div>
<div class="t" style="left:137px;top:49px;font-size:9px;color:#2a2a2a;transform:translate(0.00px,0.00px) scaleX(0.8102);">Times New Ron</div>
<div class="t" style="left:201px;top:49px;font-size:9px;color:#2a2a2a;transform:translate(0.00px,0.00px) scaleX(0.7488);">12</div>
<div class="t" style="left:206px;top:89px;font-size:8.3px;color:#555;transform:translate(0.00px,0.82px) scaleX(0.9153);">Шрифт</div>
<div class="t" style="left:138px;top:69px;font-size:9.4px;color:#222;font-weight:700;transform:translate(0.00px,0.00px) scaleX(1.0843);">Ж</div>
<div class="t" style="left:154px;top:68px;font-size:9.6px;color:#444;font-style:italic;transform:translate(0.00px,0.00px) scaleX(1.1315);">К</div>
<div class="t" style="left:170px;top:68px;font-size:9.4px;color:#444;transform:translate(0.00px,0.00px) scaleX(0.9280);">Ч</div>
<div class="t" style="left:193px;top:70px;font-size:9px;color:#555;transform:translate(0.00px,0.00px) scaleX(0.8187);">ab</div>
<div class="t" style="left:210px;top:69px;font-size:9.2px;color:#333;transform:translate(0.00px,0.00px) scaleX(0.9796);">x</div>
<div class="t" style="left:215px;top:72px;font-size:4.4px;color:#2f7fd0;transform:translate(0.00px,1.00px) scaleX(0.9376);">2</div>
<div class="t" style="left:226px;top:69px;font-size:9.2px;color:#333;transform:translate(0.00px,0.00px) scaleX(0.9796);">x</div>
<div class="t" style="left:231px;top:66px;font-size:4.4px;color:#2f7fd0;transform:translate(0.00px,1.00px) scaleX(0.9376);">2</div>
<div class="t" style="left:238px;top:49px;font-size:10.5px;color:#444;transform:translate(0.00px,0.00px);">A</div>
<div class="t" style="left:254px;top:50px;font-size:8.8px;color:#444;transform:translate(0.00px,0.00px) scaleX(0.9362);">A</div>
<div class="t" style="left:272px;top:49px;font-size:8.8px;color:#444;transform:translate(0.00px,0.00px) scaleX(1.0218);">Aa</div>
<div class="t" style="left:300px;top:48px;font-size:10.4px;color:#555;transform:translate(0.20px,0.80px) scaleX(1.0667);">A</div>
<div class="t" style="left:292px;top:68px;font-size:9.4px;color:#444;transform:translate(0.70px,0.04px) scaleX(1.0534);">A</div>
<div class="t" style="left:380px;top:89px;font-size:8.3px;color:#555;transform:translate(0.30px,0.82px) scaleX(0.8548);">Абзац</div>
<div class="t" style="left:457px;top:48px;font-size:8.6px;color:#505050;font-weight:700;transform:translate(0.60px,0.42px) scaleX(1.5895);">¶</div>
<div class="t" style="left:720px;top:89px;font-size:8.3px;color:#555;transform:translate(0.00px,0.82px) scaleX(0.8784);">Стили</div>
<div class="t" style="left:483px;top:67px;font-size:8.4px;color:#555;transform:translate(0.00px,1.00px) scaleX(0.9237);">¶ Обычный</div>
<div class="t" style="left:529px;top:67px;font-size:8.4px;color:#555;transform:translate(0.00px,1.00px) scaleX(0.8142);">¶ Без инте...</div>
<div class="t" style="left:575px;top:67px;font-size:8.4px;color:#555;transform:translate(0.00px,1.00px) scaleX(0.9016);">Заголово...</div>
<div class="t" style="left:621px;top:67px;font-size:8.4px;color:#555;transform:translate(0.00px,1.00px) scaleX(0.8899);">Заголово...</div>
<div class="t" style="left:667px;top:67px;font-size:8.4px;color:#555;transform:translate(0.00px,1.00px) scaleX(0.9266);">Заголовок</div>
<div class="t" style="left:712px;top:67px;font-size:8.4px;color:#555;transform:translate(0.00px,1.00px) scaleX(0.8818);">Подзагол...</div>
<div class="t" style="left:757px;top:67px;font-size:8.4px;color:#555;transform:translate(0.00px,1.00px) scaleX(0.8696);">Слабое в...</div>
<div class="t" style="left:802px;top:67px;font-size:8.4px;color:#555;transform:translate(0.00px,1.00px) scaleX(0.8628);">Выделение</div>
<div class="t" style="left:849px;top:67px;font-size:8.4px;color:#555;transform:translate(0.00px,1.00px) scaleX(0.8776);">Сильное...</div>
<div class="t" style="left:899px;top:67px;font-size:8.4px;color:#555;transform:translate(0.00px,1.00px) scaleX(0.9107);">Строгий</div>
<div class="t" style="left:943px;top:67px;font-size:8.4px;color:#555;transform:translate(0.00px,1.00px) scaleX(0.8613);">Цитата 2</div>
<div class="t" style="left:484px;top:52px;font-size:8.7px;color:#111;font-weight:700;transform:translate(0.00px,1.00px) scaleX(0.8781);">АаБбВвГг,</div>
<div class="t" style="left:530px;top:52px;font-size:8.7px;color:#111;font-weight:700;transform:translate(0.00px,1.00px) scaleX(0.8580);">АаБбВвГг,</div>
<div class="t" style="left:576px;top:53px;font-size:12.2px;color:#5b9bd5;transform:translate(0.00px,0.00px) scaleX(0.8356);">АаБбВв</div>
<div class="t" style="left:621px;top:52px;font-size:10px;color:#5b9bd5;transform:translate(0.00px,0.00px) scaleX(0.8660);">АаБбВвГ</div>
<div class="t" style="left:667px;top:50px;font-size:19.4px;color:#222;transform:translate(0.00px,1.00px) scaleX(0.9708);">АаЬ</div>
<div class="t" style="left:711px;top:52px;font-size:8.4px;color:#666;transform:translate(0.00px,1.00px) scaleX(1.0823);">АаБбВвГ</div>
<div class="t" style="left:758px;top:53px;font-size:8.3px;color:#484848;font-style:italic;transform:translate(0.00px,0.10px) scaleX(0.9693);">АаБбВвГг</div>
<div class="t" style="left:803px;top:53px;font-size:8.3px;color:#222;font-weight:700;font-style:italic;transform:translate(0.00px,0.10px) scaleX(0.8876);">АаБбВвГг</div>
<div class="t" style="left:849px;top:53px;font-size:8.3px;color:#5b9bd5;font-style:italic;transform:translate(0.00px,0.10px) scaleX(0.9564);">АаБбВвГг</div>
<div class="t" style="left:893px;top:52px;font-size:8.7px;color:#111;font-weight:700;transform:translate(0.30px,1.00px) scaleX(0.8490);">АаБбВвГг,</div>
<div class="t" style="left:940px;top:53px;font-size:8.3px;color:#555;font-style:italic;transform:translate(0.20px,0.10px) scaleX(0.9512);">АаБбВвГг</div>
<div class="t" style="left:26px;top:106px;font-size:8.1px;color:#3c3c3c;font-weight:700;transform:translate(0.00px,0.00px) scaleX(0.8716);">ПРЕДУПРЕЖДЕНИЕ СИСТЕМЫ БЕЗОПАСНОСТИ</div>
<div class="t" style="left:203px;top:106px;font-size:8.1px;color:#333;transform:translate(0.00px,0.00px) scaleX(0.9546);">Запуск макросов отключен.</div>
<div class="t" style="left:325px;top:105px;font-size:9.2px;color:#444;transform:translate(0.30px,0.31px) scaleX(0.8340);">Включить содержимое</div>
<div class="t" style="left:4px;top:645px;font-size:8.3px;color:#3a3a3a;transform:translate(0.00px,0.82px) scaleX(0.8619);">Страница 1 из 5</div>
<div class="t" style="left:71px;top:645px;font-size:8.3px;color:#3a3a3a;transform:translate(0.00px,0.82px) scaleX(0.8289);">Число слов: 803</div>
<div class="t" style="left:135px;top:645px;font-size:8.3px;color:#3a3a3a;transform:translate(0.00px,0.82px) scaleX(0.8932);">русский</div>
<div class="t" style="left:185px;top:645px;font-size:8.3px;color:#3a3a3a;transform:translate(0.00px,0.82px) scaleX(0.8921);">Специальные возможности: проверьте рекомендации</div>
<div class="t" style="left:971px;top:645px;font-size:8.3px;color:#3a3a3a;transform:translate(0.00px,0.82px) scaleX(0.8618);">Фокусировка</div>
</div>
</body>
</html>
